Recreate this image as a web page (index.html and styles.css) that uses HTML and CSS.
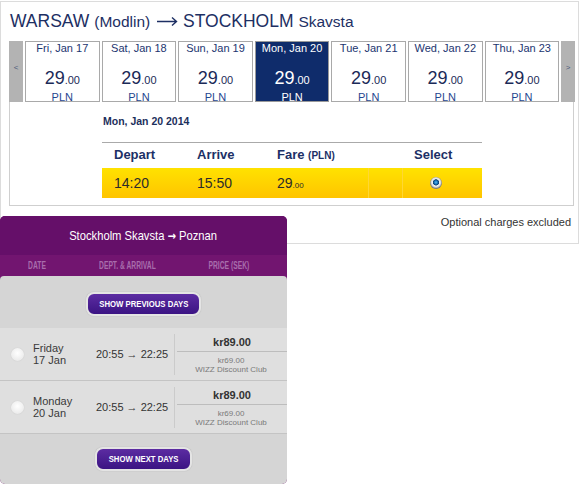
FILE: index.html
```html
<!DOCTYPE html>
<html>
  <head>
    <title>Fare selection</title>
    <link rel="stylesheet" href="styles.css">
  </head>
  <body>
    <div class="fares">
      <h1 class="route">WARSAW <small>(Modlin)</small> <svg class="arrow" width="21" height="10" viewBox="0 0 21 10" aria-label="to"><path d="M0 5.5H19.5M15 1.5L19.5 5.5L15 9.5" fill="none" stroke="#1d2f63" stroke-width="1.4"/></svg> STOCKHOLM <small>Skavsta</small></h1>

      <div class="days">
        <a class="nav">&lt;</a>
        <div class="day"><span class="date">Fri, Jan 17</span><span class="price">29<small>.00</small></span><span class="cur">PLN</span></div>
        <div class="day"><span class="date">Sat, Jan 18</span><span class="price">29<small>.00</small></span><span class="cur">PLN</span></div>
        <div class="day"><span class="date">Sun, Jan 19</span><span class="price">29<small>.00</small></span><span class="cur">PLN</span></div>
        <div class="day selected"><span class="date">Mon, Jan 20</span><span class="price">29<small>.00</small></span><span class="cur">PLN</span></div>
        <div class="day"><span class="date">Tue, Jan 21</span><span class="price">29<small>.00</small></span><span class="cur">PLN</span></div>
        <div class="day"><span class="date">Wed, Jan 22</span><span class="price">29<small>.00</small></span><span class="cur">PLN</span></div>
        <div class="day"><span class="date">Thu, Jan 23</span><span class="price">29<small>.00</small></span><span class="cur">PLN</span></div>
        <a class="nav">&gt;</a>
      </div>

      <div class="flights">
        <div class="flight-date">Mon, Jan 20 2014</div>
        <table class="flight-table">
          <colgroup>
            <col style="width:83px"><col style="width:80px"><col style="width:103px"><col style="width:34px"><col>
          </colgroup>
          <tr class="head">
            <th>Depart</th>
            <th>Arrive</th>
            <th>Fare <small>(PLN)</small></th>
            <th></th>
            <th>Select</th>
          </tr>
          <tr class="flight">
            <td>14:20</td>
            <td>15:50</td>
            <td>29<small>.00</small></td>
            <td></td>
            <td><span class="radio-on"></span></td>
          </tr>
        </table>
      </div>

      <div class="note">Optional charges excluded</div>
    </div>

    <div class="wizz">
      <div class="wizz-head"><span class="narrow">Stockholm Skavsta <b class="head-arrow">&rarr;</b> Poznan</span></div>
      <div class="wizz-cols">
        <span><span class="narrow">DATE</span></span>
        <span><span class="narrow">DEPT. &amp; ARRIVAL</span></span>
        <span><span class="narrow">PRICE (SEK)</span></span>
      </div>
      <div class="wizz-body">
        <div class="more more-prev"><button class="wizz-btn"><span class="narrow">SHOW PREVIOUS DAYS</span></button></div>

        <div class="fare-row">
          <span class="radio"></span>
          <span class="day-name">Friday<br>17 Jan</span>
          <span class="times">20:55 &rarr; 22:25</span>
          <span class="fare-price">
            <b>kr89.00</b>
            <span class="club">kr69.00<br>WIZZ Discount Club</span>
          </span>
        </div>
        <div class="fare-row">
          <span class="radio"></span>
          <span class="day-name">Monday<br>20 Jan</span>
          <span class="times">20:55 &rarr; 22:25</span>
          <span class="fare-price">
            <b>kr89.00</b>
            <span class="club">kr69.00<br>WIZZ Discount Club</span>
          </span>
        </div>

        <div class="more more-next"><button class="wizz-btn"><span class="narrow">SHOW NEXT DAYS</span></button></div>
      </div>
    </div>
  </body>
</html>
```

FILE: styles.css
```css
body {
  margin: 0;
  background: white;
  font-family: "Liberation Sans", Arial, sans-serif;
  color: #333;
}

/* top panel */

.fares {
  box-sizing: border-box;
  width: 579px;
  height: 243px;
  margin-top: 1px;
  border: 1px solid #dcdcdc;
}

.route {
  margin: 0;
  padding: 9px 0 0 9px;
  font-size: 17.5px;
  line-height: 20px;
  font-weight: normal;
  color: #1d2f63;
}

.route small {
  font-size: 15.5px;
}

.route .arrow {
  vertical-align: 1px;
  margin-left: 2px;
}

.days {
  display: flex;
  gap: 2px;
  margin: 9px 0 0 8px;
  height: 61px;
}

.nav {
  display: flex;
  align-items: center;
  justify-content: center;
  width: 14px;
  padding-bottom: 8px;
  box-sizing: border-box;
  background: #b3b3b3;
  color: #4a5a7a;
  font-size: 8px;
}

.day {
  box-sizing: border-box;
  width: 74.6px;
  border: 1px solid #a9a9a9;
  background: white;
  color: #1c3570;
  text-align: center;
  display: flex;
  flex-direction: column;
}

.day .date {
  font-size: 11px;
  line-height: 13px;
}

.day .price {
  margin-top: 13px;
  font-size: 18px;
  line-height: 20px;
  color: #1b2a58;
}

.day .price small {
  font-size: 11px;
}

.day .cur {
  margin-top: 1px;
  font-size: 11px;
  line-height: 13px;
  color: #1f4690;
}

.day.selected {
  background: #0f2c6b;
  border-color: #9a9a9a;
  color: white;
}

.day.selected .price,
.day.selected .cur {
  color: white;
}

.flights {
  box-sizing: border-box;
  width: 565px;
  height: 104px;
  margin-left: 8px;
  border: 1px solid #cfcfcf;
  border-top: none;
  padding: 13px 0 0 93px;
}

.flight-date {
  font-size: 10.5px;
  line-height: 13px;
  font-weight: bold;
  color: #1c2f5c;
}

.flight-table {
  width: 380px;
  margin: 14px 0 0 -1px;
  border-collapse: collapse;
  table-layout: fixed;
  border-top: 1px solid #aaa;
}

.flight-table th {
  height: 23px;
  padding: 0 0 2px 12px;
  text-align: left;
  font-size: 13px;
  color: #1c3066;
}

.flight-table th small {
  font-size: 10px;
}

.flight-table td {
  height: 30px;
  padding: 0 0 0 12px;
  font-size: 14px;
  color: #2b2b2b;
}

.flight-table td small {
  font-size: 8px;
}

.flight td {
  background: linear-gradient(#ffe200, #ffc400);
}

.flight td:nth-child(4) {
  border-left: 1px solid #ffd733;
  border-right: 1px solid #ffd733;
}

.radio-on {
  display: block;
  width: 12px;
  height: 12px;
  margin-left: 15px;
  border-radius: 50%;
  background: radial-gradient(circle at 50% 45%, #5cc0f0 0, #1c78c0 1.6px, #0c3f72 2.8px, #f4f4f4 3.4px, #dcdcdc 4.6px, #7c7c7c 6px);
}

.note {
  margin-top: 10px;
  padding-right: 7px;
  text-align: right;
  font-size: 11px;
  line-height: 13px;
  color: #333;
}

/* wizz widget */

.wizz {
  width: 287px;
  margin-top: -28px;
  border-radius: 5px;
  background: #721570;
}

.narrow {
  display: inline-block;
  white-space: nowrap;
  transform: scaleX(0.83);
}

.wizz-head {
  height: 39px;
  line-height: 39px;
  border-radius: 5px 5px 0 0;
  background: #650f69;
  color: white;
  font-size: 13.5px;
  text-align: center;
}

.head-arrow {
  font-family: "DejaVu Sans", sans-serif;
  font-size: 12px;
}

.wizz-cols {
  display: grid;
  grid-template-columns: 78px 103px 1fr;
  height: 21px;
  line-height: 21px;
  font-size: 10.5px;
  font-weight: bold;
  color: #a86dac;
  text-align: center;
}

.wizz-cols .narrow {
  transform: scaleX(0.64);
}

.wizz-cols span:last-child {
  padding-right: 6px;
}

.wizz-body {
  border-radius: 4px 4px 5px 5px;
  background: #d5d5d5;
}

.more {
  display: flex;
  justify-content: center;
}

.more-prev {
  padding: 16px 0 12px;
}

.more-next {
  padding: 13px 0 13px;
}

.wizz-btn {
  height: 24px;
  padding: 0;
  border: 2px solid #e4e4e4;
  border-radius: 8px;
  background: linear-gradient(#5c2ca2, #3b1483);
  box-shadow: 0 0 1px #999;
  color: white;
  font-family: "Liberation Sans", Arial, sans-serif;
  font-size: 9px;
  font-weight: bold;
  white-space: nowrap;
}

.wizz-btn .narrow {
  transform: scaleX(0.86);
}

.more-prev .wizz-btn {
  width: 115px;
}

.more-next .wizz-btn {
  width: 97px;
}

.fare-row {
  display: grid;
  grid-template-columns: 33px 63px 78px 1fr;
  align-items: center;
  height: 52px;
  border-bottom: 1px solid #c4c4c4;
  background: #dfdfdf;
  font-size: 11px;
  color: #3a3a3a;
}

.radio {
  width: 13px;
  height: 13px;
  margin-left: 11px;
  border-radius: 50%;
  background: radial-gradient(circle at 50% 40%, #ffffff, #ececec 70%, #d0d0d0);
  box-shadow: 0 0 1px #bbb;
}

.day-name {
  line-height: 12px;
}

.times {
  color: #333;
}

.fare-price {
  display: flex;
  flex-direction: column;
  align-self: stretch;
  margin: 6px 0 5px;
  border-left: 1px solid #cbcbcb;
  text-align: center;
}

.fare-price b {
  height: 17px;
  line-height: 17px;
  margin-left: 2px;
  border-bottom: 1px solid #bdbdbd;
  color: #333;
}

.club {
  padding-top: 4px;
  font-size: 8px;
  line-height: 9px;
  color: #7a7a7a;
}
```
